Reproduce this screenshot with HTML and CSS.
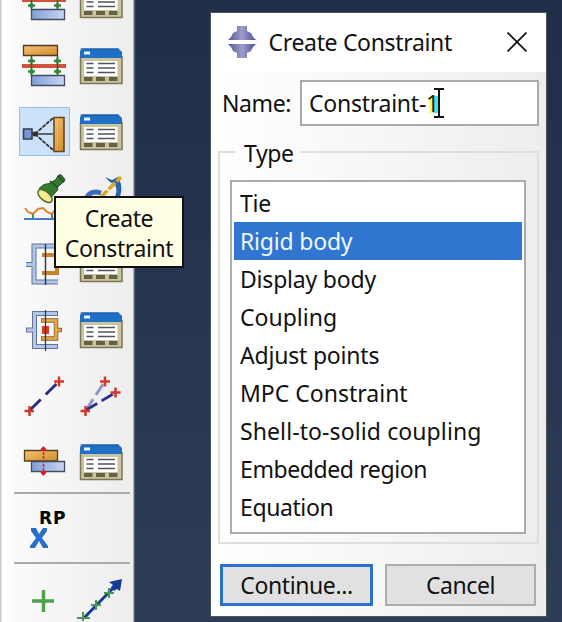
FILE: index.html
```
<!DOCTYPE html>
<html lang="en">
<head>
<meta charset="utf-8">
<title>Create Constraint</title>
<link rel="stylesheet" href="styles.css">
</head>
<body>
<svg class="defs" width="0" height="0" aria-hidden="true">
  <defs>
    <linearGradient id="orange" x1="0" y1="0" x2="1" y2="1"><stop offset="0" stop-color="#f3c476"/><stop offset="1" stop-color="#d08a27"/></linearGradient>
    <linearGradient id="blue" x1="0" y1="0" x2="1" y2="0"><stop offset="0" stop-color="#819fd5"/><stop offset="1" stop-color="#c9d6f3"/></linearGradient>
    <linearGradient id="logo" x1="0" y1="0" x2="1" y2="0"><stop offset="0" stop-color="#555697"/><stop offset=".5" stop-color="#9b9dca"/><stop offset="1" stop-color="#4e4f91"/></linearGradient>
    <symbol id="manager" viewBox="73 33 56 66">
      <path d="M80 57h42v27H80z" fill="#c9c4a0"/>
      <path d="M80.500 56v27.500h41.500V56" fill="none" stroke="#7b7653" stroke-width="1.500"/>
      <path d="M80 58V51l2-2.500h36.500L122 52v6z" fill="#1f70c4"/>
      <path d="M80.500 49h38" stroke="#1a57a0"/>
      <path d="M84 51.500h6v3h-6z" fill="#e9f4ff"/>
      <path d="M84 61h33.500v15H84z" fill="#fff"/>
      <path d="M86.500 63.500h7M86.500 68h7M86.500 72.500h7M98 63.500h17M98 68h17M98 72.500h17" stroke="#52545f" stroke-width="1.600"/>
      <path d="M84 77h8.500v4H84zM96 77h9v4h-9zM109 77h8.500v4H109z" fill="#656044"/>
    </symbol>
    <symbol id="tie" viewBox="16 33 56 66">
      <path d="M23.500 45.500h34v10h-34z" fill="url(#orange)" stroke="#4b3b28" stroke-width="1.300"/>
      <path d="M31.500 75.500h33v10h-33z" fill="url(#blue)" stroke="#414b63" stroke-width="1.300"/>
      <path d="M22 66h44" stroke="#d4513e" stroke-width="4"/>
      <path d="M31.500 56v20M57.500 56v20" stroke="#276b29" stroke-width="1.600"/>
      <path d="M28 61h7M54 61h7M28 71.500h7M54 71.500h7M31.500 58.500v5M57.500 58.500v5M31.500 69v5M57.500 69v5" stroke="#34843a" stroke-width="2.500"/>
    </symbol>
  </defs>
</svg>
<main class="desktop">
  <aside class="toolbox">
    <div class="tools">
      <svg class="tool"><use href="#tie"/></svg>
      <svg class="tool"><use href="#manager"/></svg>
      <svg class="tool"><use href="#tie"/></svg>
      <svg class="tool"><use href="#manager"/></svg>

      <svg class="tool" viewBox="16 99 56 66">
        <path d="M19.500 107.500h50v48h-50z" fill="#cbe2f8" stroke="#93bfe8"/>
        <path d="M35 134L53 118M35 134l18 16" stroke="#333" stroke-width="1.800" stroke-dasharray="4 1"/>
        <path d="M32 134h21" stroke="#444" stroke-width="1.600"/>
        <path d="M23.500 129h8.500v10h-8.500z" fill="#7895cf" stroke="#343d55" stroke-width="1.600"/>
        <circle cx="35" cy="134" r="2.500" fill="#302c2b"/>
        <path d="M54 117.500h10v34H54z" fill="url(#orange)" stroke="#684719" stroke-width="1.600"/>
      </svg>
      <svg class="tool"><use href="#manager"/></svg>

      <svg class="tool" viewBox="16 165 56 66">
        <path d="M58 175.500l3-1 4 5-1 2-7 6 1 2-7 8-12-9 5-4 5-1 7-4z" fill="#347b31" stroke="#285128"/>
        <path d="M50 181l8 7M58 176l6 6" stroke="#244b24" stroke-width="1.500"/>
        <ellipse cx="45" cy="196" rx="8.500" ry="4.500" transform="rotate(40 45 196)" fill="#f4ed91" stroke="#506b2b" stroke-width="1.500"/>
        <path d="M25 208l3 4 5 2 5-5 5-1 4 4 5 2 5-6" fill="none" stroke="#dc8530" stroke-width="2"/>
        <path d="M33 214v5M52 214v5" stroke="#3e9655" stroke-width="2"/>
        <path d="M24 219h36" stroke="#4679cb" stroke-width="1.800"/>
      </svg>
      <svg class="tool" viewBox="73 165 56 66">
        <path d="M87 197c3-5 8-6 14-4" fill="none" stroke="#3d6db8" stroke-width="5"/>
        <path d="M105 177l7 3 6-3 3 7c1 6 0 10-2 15h-5c3-6 3-10 1-14l-5-3z" fill="#2d61ae"/>
        <path d="M101 197L121 177" stroke="#d5a927" stroke-width="3.500" stroke-dasharray="9 2"/>
      </svg>

      <svg class="tool" viewBox="16 231 56 66">
        <path d="M58 246H34v36h24M26 264.500h8" fill="none" stroke="#657494" stroke-width="5"/>
        <path d="M58 246H34v36h24M26 264.500h8" fill="none" stroke="#b1c6ed" stroke-width="3"/>
        <path d="M42 255h17M42 273h15v-6" fill="none" stroke="#c8812c" stroke-width="4"/>
        <path d="M45.500 244v41" stroke="#343b43" stroke-width="1.500"/>
      </svg>
      <svg class="tool"><use href="#manager"/></svg>

      <svg class="tool" viewBox="16 297 56 66">
        <path d="M58 313.500H34.500v33H58M26 330h8" fill="none" stroke="#657494" stroke-width="5"/>
        <path d="M57 313.500H34.500v33H57M27 330h8" fill="none" stroke="#b1c6ed" stroke-width="3"/>
        <path d="M41 320.500h15v18H41M57 330h5" fill="none" stroke="#8b6630" stroke-width="4.500"/>
        <path d="M42 320.500h14v18H42M57 330h4" fill="none" stroke="#e5ad48" stroke-width="2.700"/>
        <path d="M42 326h7v8h-7z" fill="#d83a29"/>
        <path d="M45.500 310v41" stroke="#343b43" stroke-width="1.300"/>
      </svg>
      <svg class="tool"><use href="#manager"/></svg>

      <svg class="tool" viewBox="16 363 56 66">
        <path d="M30 410l28.500-28" stroke="#262b83" stroke-width="2.800" stroke-dasharray="15 7"/>
        <path d="M24.500 411h9.500M29.500 406v10M54 381.500h10M59 376.500v10" stroke="#cf3a2d" stroke-width="2.500"/>
      </svg>
      <svg class="tool" viewBox="73 363 56 66">
        <path d="M86 410l18.500-28" stroke="#9295cc" stroke-width="3" stroke-dasharray="13 5"/>
        <path d="M86 410l29-17" stroke="#29308c" stroke-width="2.800" stroke-dasharray="13 5"/>
        <path d="M80.500 411h9.500M85.500 406v10M100 381.500h10M105 376.500v10M110.500 392.500h10M115.500 387.500v10" stroke="#cf3a2d" stroke-width="2.500"/>
      </svg>

      <svg class="tool" viewBox="16 429 56 66">
        <path d="M24.500 450.500h33v10.500h-33z" fill="url(#orange)" stroke="#594019" stroke-width="1.300"/>
        <path d="M31.500 461.500h33v10h-33z" fill="url(#blue)" stroke="#414b63" stroke-width="1.300"/>
        <path d="M43.500 448v26" stroke="#c52a2d" stroke-width="1.500" stroke-dasharray="3 1"/>
        <path d="M40.500 451c0-3 1.500-3 3-5 1.500 2 3 2 3 5zM40.500 471h6c0 3-1.500 3-3 5-1.500-2-3-2-3-5z" fill="#d51f28"/>
      </svg>
      <svg class="tool"><use href="#manager"/></svg>
    </div>
    <div class="reference">
      <span class="rp">RP</span>
      <svg class="cross" viewBox="0 0 18 20"><path d="M1 0h5l3 6 4-6h4v3l-5 7 6 8v2h-5l-4-7-4 7H0v-2l6-8-5-7z" fill="#286fcb"/></svg>
    </div>
    <div class="datum">
      <svg class="tool" viewBox="16 565 56 66"><path d="M32 602h22M43.500 591v22" stroke="#4da34a" stroke-width="3.500"/></svg>
      <svg class="tool" viewBox="73 565 56 66">
        <path d="M84 619l32-33" stroke="#173c93" stroke-width="3"/>
        <path d="M122 580l-2 12-3-2-3 2-3-4 2-2-4-3z" fill="#173c93"/>
        <path d="M77 619h13M83 613v9M91 606h10M96 601v10M104 594h10M109 589v10" stroke="#4b9650" stroke-width="2"/>
      </svg>
    </div>
  </aside>

  <section class="dialog">
    <header class="titlebar">
      <svg class="logo" viewBox="0 0 30 32">
        <path d="M10 0h10v5l4 2 2 4 3 3H1l3-3 2-4 4-2zM1 18h28l-3 3-2 4-4 2v5H10v-5l-4-2-2-4z" fill="url(#logo)"/>
        <path d="M0 16h30" stroke="#cfd0e6"/><path d="M1 16h28" stroke="#fff" stroke-width="2"/>
      </svg>
      <h1 class="title">Create Constraint</h1>
      <svg class="close" viewBox="0 0 20 20"><path d="M.5.500l19 19M19.500.500l-19 19" stroke="#111" stroke-width="1.700"/></svg>
    </header>
    <div class="name-row">
      <label class="name-label">Name:</label>
      <div class="field"><span class="value">Constraint-<span class="one">1</span></span><svg class="ibeam" viewBox="0 0 10 30"><path d="M0 1h4l1 1 1-1h4M0 29h4l1-1 1 1h4M5 1v28" fill="none" stroke="#111" stroke-width="2"/></svg></div>
    </div>
    <fieldset class="type">
      <legend>Type</legend>
      <ul class="options">
        <li class="wide">Tie</li>
        <li class="wide selected">Rigid body</li>
        <li class="wide">Display body</li>
        <li class="wider">Coupling</li>
        <li class="wide">Adjust points</li>
        <li class="wider">MPC Constraint</li>
        <li class="widest">Shell-to-solid coupling</li>
        <li>Embedded region</li>
        <li>Equation</li>
      </ul>
    </fieldset>
    <footer class="actions">
      <button class="primary">Continue...</button>
      <button>Cancel</button>
    </footer>
  </section>
  <div class="tooltip">Create<br>Constraint</div>
</main>
</body>
</html>
```
FILE: styles.css
```
* { box-sizing: border-box; }
body { margin: 0; overflow: hidden; font: 23px/30px "Noto Sans", "Open Sans", sans-serif; letter-spacing: -.4px; color: #111; }
.defs { position: absolute; }
.desktop { position: relative; display: flex; align-items: flex-start; width: 562px; height: 622px; overflow: hidden; background: linear-gradient(#202e49, #2e3d56); }
.toolbox { width: 136px; height: 622px; flex: none; overflow: hidden; padding-left: 14px; background: linear-gradient(90deg, #c9c9c9 0 1px, #fff 2px, #fafafa 15px, #ededee 133px, #65758a 134px, #18253b 136px); }
.tools { display: grid; grid-template-columns: 57px 56px; grid-auto-rows: 66px; width: 117px; padding-left: 2px; margin-top: -33px; }
.tool { display: block; width: 56px; height: 66px; }
.reference { width: 116px; height: 72px; margin-top: -3px; border-top: 2px solid #aaa; border-bottom: 2px solid #aaa; padding: 17px 0 0 16px; }
.rp { display: block; margin-left: 9px; height: 15px; font: bold 17px/15px "DejaVu Sans", sans-serif; letter-spacing: 1px; color: #000; }
.cross { display: block; width: 18px; height: 20px; margin-top: 2px; }
.datum { display: flex; gap: 1px; padding-left: 2px; }
.dialog { width: 337px; height: 605px; margin: 12px 0 0 73.500px; flex: none; border: 1px solid #4c535e; background: linear-gradient(90deg, #fff, #fafafa 30%, #ededee); }
.titlebar { display: flex; align-items: center; height: 59px; padding: 0 19px 2px 16px; background: #fff; }
.logo { width: 30px; height: 32px; }
.title { flex: 1; margin: 0 0 0 12px; font: inherit; letter-spacing: -.33px; white-space: nowrap; }
.close { width: 20px; height: 20px; }
.name-row { display: flex; align-items: center; padding: 8px 7px 0 11.500px; height: 54px; }
.name-label { width: 78px; }
.field { display: flex; align-items: center; flex: 1; height: 46px; padding-left: 7px; border: 2px solid #aaa; background: #fff; letter-spacing: -.25px; }
.one { color: #0c2d1b; background: linear-gradient(90deg, transparent 20%, #ffff55 20% 50%, #43e5e8 50%); background-size: 100% 17px; background-position: 0 9px; background-repeat: no-repeat; }
.ibeam { width: 10px; height: 30px; margin-left: -5px; flex: none; }
.type { height: 406px; margin: 12px 7px 0 7.500px; padding: 14px 11px 0 10px; border: 2px solid #dedede; min-width: 0; }
.type legend { margin-left: 5px; padding: 0 7px 0 9px; height: 28px; line-height: 30px; }
.options { list-style: none; margin: 0; padding: 2px; height: 354px; border: 2px solid #aaabb0; background: #fff; }
.options li { height: 38px; padding-left: 6px; line-height: 38px; white-space: nowrap; }
.options .wide { letter-spacing: -.2px; }
.options .wider { letter-spacing: 0; }
.options .widest { letter-spacing: .1px; }
.options .selected { color: #eef6ff; background: #3076d0; }
.actions { display: flex; gap: 12px; margin: 20px 9.500px 0 9.500px; }
.actions button { flex: 1; height: 42px; padding: 0 0 1px; border: 2px solid #adadad; background: #e1e1e1; font: inherit; letter-spacing: inherit; color: #111; }
.actions .primary { border: 3px solid #2a72cd; }
.tooltip { position: absolute; left: 54px; top: 196px; width: 130px; height: 72px; padding-top: 5px; border: 2px solid #111; background: #ffffe4; text-align: center; line-height: 30px; }
```
